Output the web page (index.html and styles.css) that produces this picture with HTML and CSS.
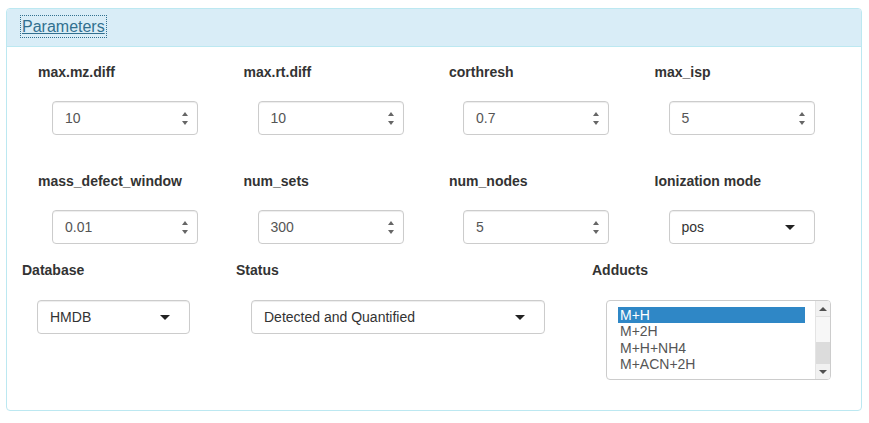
FILE: index.html
```html
<!DOCTYPE html>
<html>
<head>
<meta charset="utf-8">
<link rel="stylesheet" href="styles.css">
</head>
<body>
<div class="panel">
  <div class="panel-heading">
    <a class="panel-title" href="#">Parameters</a>
  </div>
  <div class="panel-body">
    <div class="grid4">
      <div class="field"><div class="label">max.mz.diff</div><div class="num"><span>10</span><span class="spin"><i class="up"></i><i class="down"></i></span></div></div>
      <div class="field"><div class="label">max.rt.diff</div><div class="num"><span>10</span><span class="spin"><i class="up"></i><i class="down"></i></span></div></div>
      <div class="field"><div class="label">corthresh</div><div class="num"><span>0.7</span><span class="spin"><i class="up"></i><i class="down"></i></span></div></div>
      <div class="field"><div class="label">max_isp</div><div class="num"><span>5</span><span class="spin"><i class="up"></i><i class="down"></i></span></div></div>
      <div class="field row2"><div class="label">mass_defect_window</div><div class="num"><span>0.01</span><span class="spin"><i class="up"></i><i class="down"></i></span></div></div>
      <div class="field row2"><div class="label">num_sets</div><div class="num"><span>300</span><span class="spin"><i class="up"></i><i class="down"></i></span></div></div>
      <div class="field row2"><div class="label">num_nodes</div><div class="num"><span>5</span><span class="spin"><i class="up"></i><i class="down"></i></span></div></div>
      <div class="field row2"><div class="label">Ionization mode</div><div class="sel"><span>pos</span><i class="caret"></i></div></div>
    </div>
    <div class="grid3">
      <div class="field"><div class="label">Database</div><div class="sel db"><span>HMDB</span><i class="caret"></i></div></div>
      <div class="field"><div class="label">Status</div><div class="sel status"><span>Detected and Quantified</span><i class="caret"></i></div></div>
      <div class="field adducts-col"><div class="label">Adducts</div>
        <div class="listbox">
          <div class="items">
            <div class="item selected">M+H</div>
            <div class="item">M+2H</div>
            <div class="item">M+H+NH4</div>
            <div class="item">M+ACN+2H</div>
          </div>
          <div class="scrollbar">
            <div class="sb-btn"><i class="sb-up"></i></div>
            <div class="sb-thumb"></div>
            <div class="sb-track"></div>
            <div class="sb-btn"><i class="sb-down"></i></div>
          </div>
        </div>
      </div>
    </div>
  </div>
</div>
</body>
</html>
```
FILE: styles.css
```css
* { box-sizing: border-box; }
html, body { margin: 0; padding: 0; background: #fff; }
body {
  font-family: "Liberation Sans", Arial, sans-serif;
  font-size: 14px;
  color: #333;
  width: 869px;
  height: 423px;
  overflow: hidden;
}
.panel {
  margin: 8px 0 0 6px;
  width: 856px;
  height: 403px;
  border: 1px solid #bce8f1;
  border-radius: 4px;
  background: #fff;
}
.panel-heading {
  height: 38px;
  background: #d9edf7;
  border-bottom: 1px solid #bce8f1;
  border-radius: 3px 3px 0 0;
  padding: 8px 0 0 15px;
}
.panel-title {
  display: inline-block;
  font-size: 16px;
  line-height: 19px;
  color: #31708f;
  text-decoration: underline;
  outline: 1px dotted #31708f;
  outline-offset: 1px;
}
.panel-body {
  padding-top: 15px;
}
.grid4 {
  display: grid;
  grid-template-columns: repeat(4, 205.5px);
  padding-left: 31px;
}
.label {
  font-weight: bold;
  line-height: 20px;
  white-space: nowrap;
}
.row2 { margin-top: 36px; }
.num, .sel {
  margin-top: 19px;
  margin-left: 14px;
  width: 146px;
  height: 34px;
  border: 1px solid #ccc;
  border-radius: 4px;
  box-shadow: inset 0 1px 1px rgba(0,0,0,0.075);
  display: flex;
  align-items: center;
  justify-content: space-between;
  padding: 0 9px 0 12px;
  color: #555;
  background: #fff;
}
.spin {
  display: flex;
  flex-direction: column;
  gap: 5px;
  align-items: center;
}
.spin i { display: block; width: 0; height: 0; border-left: 3.5px solid transparent; border-right: 3.5px solid transparent; }
.spin .up { border-bottom: 4px solid #666; }
.spin .down { border-top: 4px solid #666; }
.sel { padding-right: 19px; color: #333; }
.caret {
  display: block; width: 0; height: 0;
  border-left: 5px solid transparent;
  border-right: 5px solid transparent;
  border-top: 5px solid #222;
}
.grid3 {
  display: grid;
  grid-template-columns: 214px 356px 260px;
  padding-left: 15px;
  margin-top: 16px;
}
.sel.db { margin-top: 20px; margin-left: 15px; width: 153px; padding-left: 12px; }
.sel.status { margin-top: 20px; margin-left: 15px; width: 294px; padding-left: 12px; }
.adducts-col .label { }
.listbox {
  margin-top: 20px;
  margin-left: 14px;
  width: 225px;
  height: 80px;
  border: 1px solid #ccc;
  border-radius: 4px;
  display: flex;
  overflow: hidden;
}
.items {
  flex: 1;
  padding: 6px 10px 0 11px;
}
.item {
  line-height: 16.3px;
  height: 16.3px;
  color: #555;
  padding-left: 2px;
}
.item.selected { background: #2f87c6; color: #fff; }
.scrollbar {
  width: 15px;
  display: flex;
  flex-direction: column;
  background: #f1f1f1;
  border-left: 1px solid #e4e4e4;
}
.sb-btn {
  height: 15px;
  display: flex;
  align-items: center;
  justify-content: center;
  background: #f1f1f1;
}
.sb-up, .sb-down { display: block; width: 0; height: 0; border-left: 4px solid transparent; border-right: 4px solid transparent; }
.sb-up { border-bottom: 4px solid #505050; }
.sb-down { border-top: 4px solid #505050; }
.sb-thumb { height: 26px; background: #f7f7f7; border-top: 1px solid #e0e0e0; }
.sb-track { flex: 1; background: #dcdcdc; }
```
